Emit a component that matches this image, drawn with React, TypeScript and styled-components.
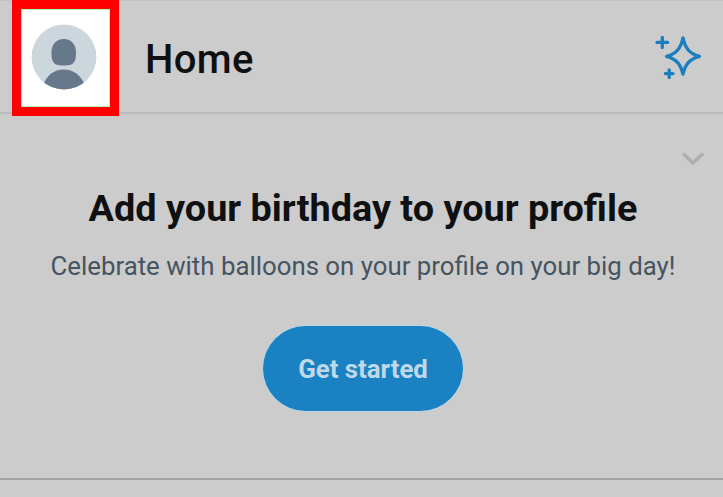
import React from "react";
import styled, { createGlobalStyle } from "styled-components";

const GlobalStyle = createGlobalStyle`
  *, *::before, *::after { box-sizing: border-box; }
  body { margin: 0; background: #cccccc; font-family: Roboto, "Liberation Sans", sans-serif; }
`;

const Screen = styled.div`
  display: flex;
  flex-direction: column;
  height: 497px;
  overflow: hidden;
  background: #cccccc;
`;

const Header = styled.header`
  position: relative;
  display: flex;
  align-items: center;
  flex: none;
  height: 114px;
  padding: 0 21px 0 145px;
  border-top: 1px solid #c3c3c4;
  border-bottom: 2px solid #bbbcbf;
`;

const AvatarButton = styled.button`
  position: absolute;
  top: -1px;
  left: 12px;
  width: 107px;
  height: 116px;
  padding: 0;
  border: 9px solid #ff0000;
  background: #ffffff;
  box-shadow: inset 0 0 0 1px #b5f7b0;
`;

const AvatarIcon = styled.svg`
  position: absolute;
  left: 9.5px;
  top: 15px;
  width: 66px;
  height: 66px;
`;

const PageTitle = styled.h1`
  margin: 7px auto 0 0;
  font-size: 40px;
  line-height: 48px;
  font-weight: 500;
  letter-spacing: 0.4px;
  color: #0f1011;
`;

const SparkleIcon = styled.svg`
  width: 48px;
  height: 48px;
  fill: none;
  stroke: #1b7fbf;
  stroke-width: 3.3;
  stroke-linecap: round;
  stroke-linejoin: round;
`;

const Prompt = styled.section`
  position: relative;
  display: flex;
  flex-direction: column;
  align-items: center;
  flex: none;
  height: 366px;
  padding: 70px 0 0 3px;
  border-bottom: 2px solid #a3a6a8;
`;

const CollapseIcon = styled.svg`
  position: absolute;
  left: 680px;
  top: 35.5px;
  width: 26px;
  height: 18px;
  fill: none;
  stroke: #adb0b2;
  stroke-width: 3.6;
`;

const PromptTitle = styled.h2`
  margin: 0;
  font-size: 37.85px;
  line-height: 48px;
  font-weight: 700;
  color: #0f1011;
  white-space: nowrap;
`;

const PromptText = styled.p`
  margin: 18px 0 0;
  font-size: 25.8px;
  line-height: 32px;
  color: #465461;
  white-space: nowrap;
`;

const StartButton = styled.button`
  width: 200px;
  height: 85px;
  margin: 44px 1px 0 0;
  padding: 1px 0 0 1px;
  border: 0;
  border-radius: 43px;
  background: #1a81c2;
  box-shadow: 0 0 0 1px #bcd5e3;
  font: 700 25.8px/32px Roboto, sans-serif;
  color: #bfd9eb;
  white-space: nowrap;
`;

export default function App() {
  return (
    <>
      <GlobalStyle />
      <Screen>
        <Header>
          <AvatarButton aria-label="Profile">
            <AvatarIcon viewBox="0 0 66 66">
              <defs>
                <clipPath id="avatar-circle">
                  <circle cx="33" cy="33" r="32.4" />
                </clipPath>
              </defs>
              <circle cx="33" cy="33" r="32.4" fill="#ccd6dd" />
              <path
                d="M32.800 15c7.600 0 12.200 5.800 12.200 13.200 0 4-.1 6.700-1.500 9.300-1.700 3.200-5 4-10.700 4s-9.200-.8-10.900-4c-1.300-2.600-1.400-5.300-1.400-9.300C20.500 20.800 25.200 15 32.800 15z"
                fill="#66788a"
              />
              <path
                d="M12 62c3-10.500 11-16.500 20.800-16.500S50.600 51.500 54 62v5H12z"
                fill="#66788a"
                clipPath="url(#avatar-circle)"
              />
            </AvatarIcon>
          </AvatarButton>
          <PageTitle>Home</PageTitle>
          <SparkleIcon viewBox="0 0 48 48">
            <path d="M29 4.800C31 14 34.500 20.500 45.500 23.300 34.500 26.200 31 32.500 29 41.200 27 32.500 23.500 26.200 12.500 23.300 23.500 20.500 27 14 29 4.800z" />
            <path d="M8.300 4.300v10.200M3 9.400h10.600M15.200 36.800v7.600M11.400 40.600h7.600" />
          </SparkleIcon>
        </Header>
        <Prompt>
          <CollapseIcon viewBox="0 0 26 18">
            <path d="M3 3.500l10 9.500 10-9.500" />
          </CollapseIcon>
          <PromptTitle>Add your birthday to your profile</PromptTitle>
          <PromptText>Celebrate with balloons on your profile on your big day!</PromptText>
          <StartButton>Get started</StartButton>
        </Prompt>
      </Screen>
    </>
  );
}
